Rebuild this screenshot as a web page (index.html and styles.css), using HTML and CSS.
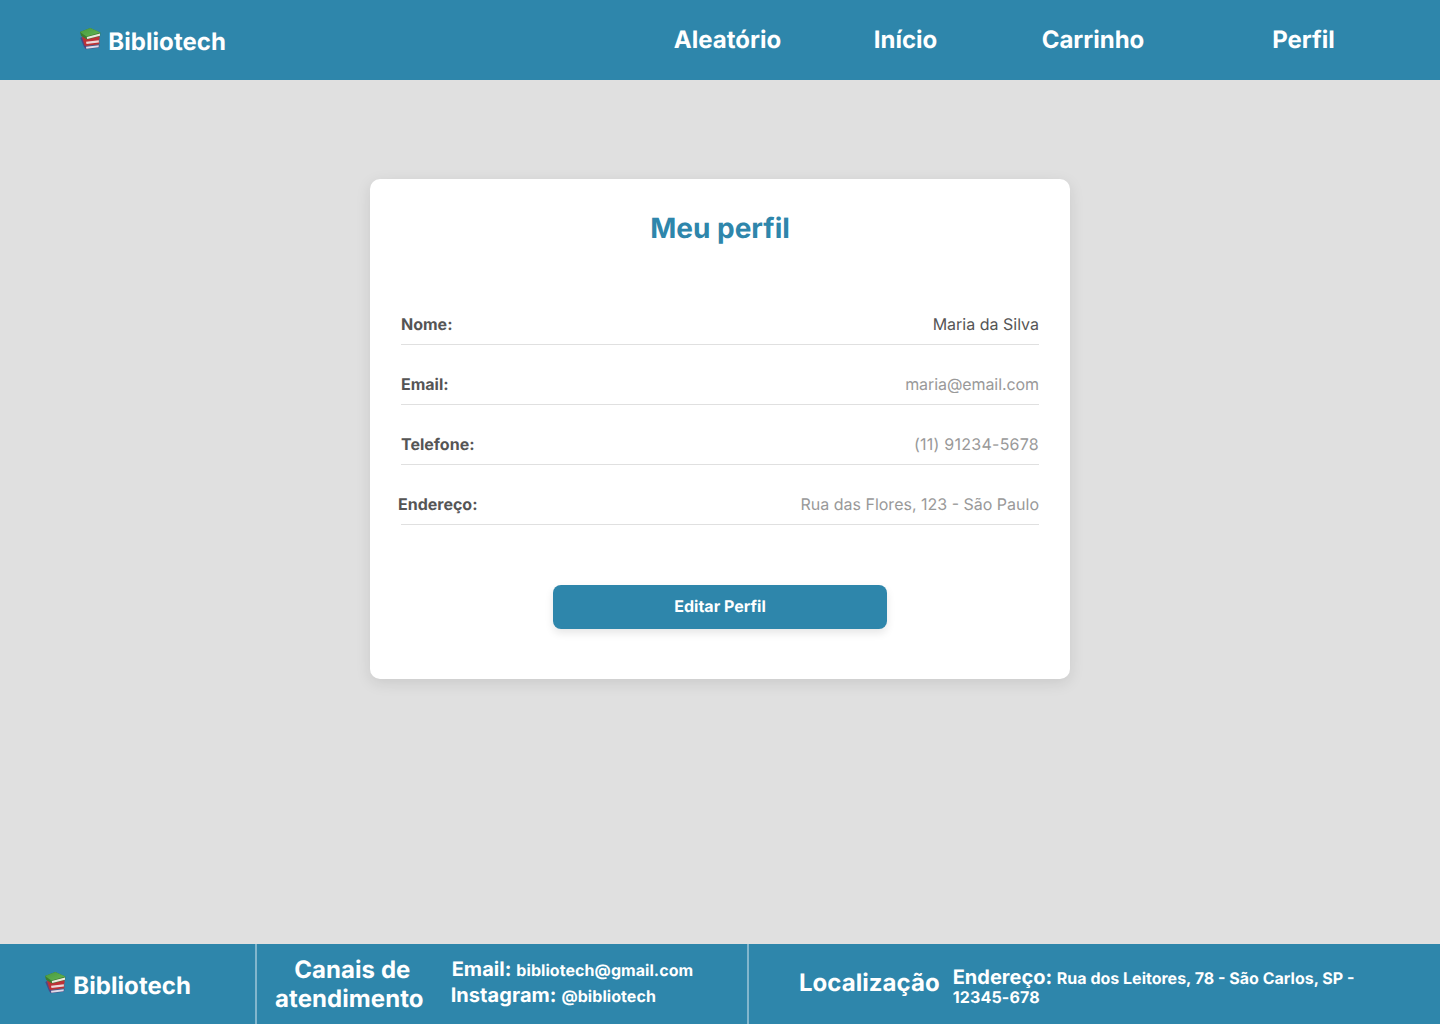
FILE: index.html
```html
<!DOCTYPE html>
<html lang="pt-BR">
<head>
<meta charset="utf-8">
<title>Bibliotech - Meu perfil</title>
<link rel="stylesheet" href="styles.css">
</head>
<body>
<svg width="0" height="0" class="sprite" aria-hidden="true">
  <defs>
    <linearGradient id="cover" x1="0" y1="0" x2="1" y2="1">
      <stop offset="0" stop-color="#4a9a3e"/><stop offset="1" stop-color="#62b552"/>
    </linearGradient>
    <symbol id="books" viewBox="0 0 22 24">
      <path d="M1.300 11 3 10l4 9 13.300-1.200.3.800-.9 2.200L6.800 22.300 5 20z" fill="#4a4a86"/>
      <path d="m7 19.800 12.800-1.500-.2 1.900-12.300 1.500z" fill="#dfdce8"/>
      <path d="m2.800 9.300 4 1 13.500-1.600.4 2.500-.6 1.500.3 4.600-13.700 1.600-1.200-.7z" fill="#bd3136"/>
      <path d="m7 14.800 12.800-1.500.1 2.300-12.400 1.500z" fill="#ecd9da"/>
      <path d="M1 5 11.300 1l10 4.500v.6l-.2 2.900L8 12.400 6.800 11.800 2 8.700z" fill="#3b7c30"/>
      <path d="m7.800 10 13.200-3.600v2.300L8.200 11.900z" fill="#eceadf"/>
      <path d="M1 5 11.300 1l10 4.500L7.500 9.500z" fill="url(#cover)"/>
    </symbol>
  </defs>
</svg>

<header class="topbar">
  <a class="brand"><svg class="books"><use href="#books"/></svg>Bibliotech</a>
  <nav class="nav">
    <a>Aleatório</a>
    <a>Início</a>
    <a>Carrinho</a>
    <a>Perfil</a>
  </nav>
</header>

<main class="content">
  <section class="card">
    <h1 class="title">Meu perfil</h1>
    <dl class="fields">
      <div class="field"><dt>Nome:</dt><dd class="name">Maria da Silva</dd></div>
      <div class="field"><dt>Email:</dt><dd class="mail">maria@email.com</dd></div>
      <div class="field"><dt>Telefone:</dt><dd class="phone">(11) 91234-5678</dd></div>
      <div class="field"><dt class="address-label">Endereço:</dt><dd>Rua das Flores, 123 - São Paulo</dd></div>
    </dl>
    <button class="edit" type="button">Editar Perfil</button>
  </section>
</main>

<footer class="footer">
  <div class="footer-brand"><a class="brand"><svg class="books"><use href="#books"/></svg>Bibliotech</a></div>
  <div class="footer-contact">
    <h2 class="footer-title"><span class="first-line">Canais de</span><br>atendimento</h2>
    <div class="contacts">
      <p class="email">Email: <span>bibliotech@gmail.com</span></p>
      <p>Instagram: <span>@bibliotech</span></p>
    </div>
  </div>
  <div class="footer-location">
    <h2 class="footer-title">Localização</h2>
    <div class="address">
      <p>Endereço: <span>Rua dos Leitores, 78 - São Carlos, SP -</span></p>
      <p class="zip">12345-678</p>
    </div>
  </div>
</footer>
</body>
</html>
```
FILE: styles.css
```css
* {
  box-sizing: border-box;
  margin: 0;
  padding: 0;
}

body {
  display: flex;
  flex-direction: column;
  height: 1024px;
  background: #e0e0e0;
  font-family: Inter, "Liberation Sans", sans-serif;
  font-size: 16px;
  text-rendering: geometricPrecision;
}

.sprite {
  position: absolute;
}

.topbar {
  display: flex;
  justify-content: space-between;
  align-items: flex-start;
  height: 80px;
  padding: 25px 24.5px 0 79px;
  background: #2e86ab;
  color: #fff;
}

.brand {
  display: flex;
  gap: 7.3px;
  font-size: 24px;
  font-weight: 700;
  line-height: 29px;
  letter-spacing: 0.06px;
}

.topbar .brand {
  padding-top: 2px;
}

.books {
  width: 22px;
  height: 24px;
}

.nav {
  display: grid;
  grid-template-columns: 178px 178px 197px 224px;
  font-size: 24px;
  font-weight: 700;
  line-height: 29px;
  text-align: center;
}

.content {
  flex: 1;
  padding-top: 99px;
}

.card {
  display: flex;
  flex-direction: column;
  align-items: center;
  width: 700px;
  height: 500px;
  margin: 0 auto;
  padding: 32px 31px 0;
  border-radius: 10px;
  background: #fff;
  box-shadow: 0 4px 15px rgba(0, 0, 0, 0.1);
}

.title {
  color: #2e86ab;
  font-size: 28px;
  font-weight: 700;
  line-height: 34px;
}

.fields {
  width: 100%;
  margin-top: 40px;
}

.field {
  display: flex;
  justify-content: space-between;
  height: 60px;
  padding-top: 30px;
  border-bottom: 1px solid #e0e0e0;
  line-height: 19px;
}

.field dt {
  color: #555;
  font-weight: 700;
}

.address-label {
  margin-left: -3px;
}

.field dd {
  color: #999;
  font-weight: 400;
}

.field .name {
  color: #555;
}

.field .mail {
  letter-spacing: -0.08px;
}

.field .phone {
  letter-spacing: 0.25px;
}

.edit {
  width: 334px;
  height: 44px;
  margin-top: 60px;
  padding-bottom: 2px;
  border: 0;
  border-radius: 8px;
  background: #2e86ab;
  box-shadow: 0 4px 8px rgba(0, 0, 0, 0.1);
  color: #fff;
  font: 700 16px/19px Inter, "Liberation Sans", sans-serif;
  text-rendering: inherit;
}

.footer {
  display: grid;
  grid-template-columns: 257px 492px 1fr;
  height: 80px;
  background: #2e86ab;
  color: #fff;
  font-weight: 700;
}

.footer-brand {
  padding: 27px 0 0 44px;
  border-right: 2px solid #82b6cd;
}

.footer-contact {
  display: flex;
  gap: 27px;
  padding: 11px 0 0 18px;
  border-right: 2px solid #82b6cd;
}

.footer-title {
  font-size: 24px;
  font-weight: 700;
  line-height: 29px;
  letter-spacing: 0.08px;
  text-align: center;
}

.first-line {
  padding-left: 6px;
}

.contacts {
  padding-top: 1px;
  font-size: 20px;
  line-height: 26px;
  letter-spacing: 0.06px;
}

.email {
  padding-left: 1px;
}

.contacts span,
.address span {
  font-size: 16px;
  line-height: 19px;
}

.footer-location {
  display: flex;
  gap: 13px;
  padding: 24px 0 0 50px;
}

.footer-location .footer-title {
  letter-spacing: 0.04px;
}

.address {
  margin-top: -1px;
  font-size: 20px;
  line-height: 20px;
}

.address .zip {
  font-size: 16px;
  line-height: 19px;
  letter-spacing: 0.15px;
}
```
